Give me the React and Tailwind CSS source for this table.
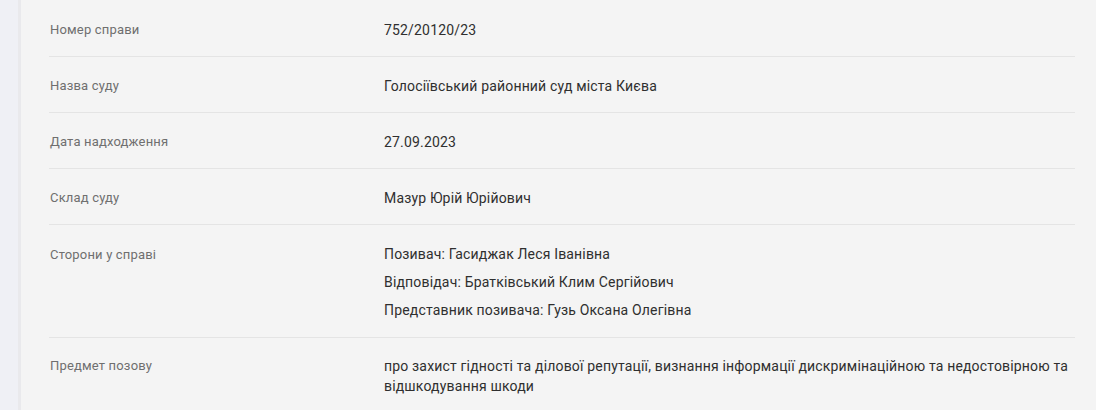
import React from 'react'

const rows = [
  { label: 'Номер справи', value: ['752/20120/23'] },
  { label: 'Назва суду', value: ['Голосіївський районний суд міста Києва'] },
  { label: 'Дата надходження', value: ['27.09.2023'] },
  { label: 'Склад суду', value: ['Мазур Юрій Юрійович'] },
  {
    label: 'Сторони у справі',
    list: [
      'Позивач: Гасиджак Леся Іванівна',
      'Відповідач: Братківський Клим Сергійович',
      'Представник позивача: Гузь Оксана Олегівна',
    ],
  },
  {
    label: 'Предмет позову',
    value: ['про захист гідності та ділової репутації, визнання інформації дискримінаційною та недостовірною та відшкодування шкоди'],
  },
]

const Row = ({ row, last }) => {
  const top = row.list ? 'pt-[21px]' : last ? 'pt-[19px]' : 'pt-[20px]'
  return (
    <div className={'flex tracking-[0.17px] ' + (last ? '' : 'border-b border-[#e4e4e4]')}>
      <div className={'w-[335px] shrink-0 pl-[1px] text-[13px] leading-[18px] text-[#6f6f6f] ' + top}>
        {row.label}
      </div>
      {row.list ? (
        <div className="flex-1 pt-[19px] pb-[17px] flex flex-col gap-[8px] text-[14px] leading-[20px] text-[#2f2f2f]">
          {row.list.map((t) => (
            <div key={t}>{t}</div>
          ))}
        </div>
      ) : (
        <div className={'flex-1 text-[14px] leading-[20px] text-[#2f2f2f] ' + (last ? 'pt-[18px] pb-5' : 'pt-[19px] pb-[16px]')}>
          {row.value}
        </div>
      )}
    </div>
  )
}

const App = () => {
  return (
    <div className="flex min-h-[410px] bg-[#f4f4f4]" style={{ fontFamily: 'Roboto, "Noto Sans", sans-serif' }}>
      <div className="w-[18px] shrink-0 bg-[#eff0f5]"></div>
      <div className="w-[3px] shrink-0 bg-[#e9e9ec]"></div>
      <div className="flex-1 pl-[28px] pr-[21px] pt-[1px]">
        {rows.map((r, i) => (
          <Row key={r.label} row={r} last={i === rows.length - 1} />
        ))}
      </div>
    </div>
  )
}

export default App
